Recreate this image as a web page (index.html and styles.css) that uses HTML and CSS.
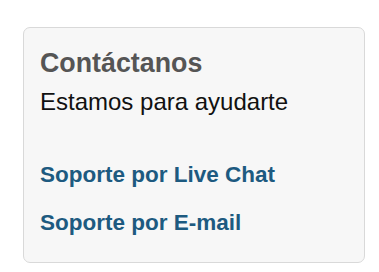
FILE: index.html
```html
<!DOCTYPE html>
<html>
<head>
  <title>Contacto</title>
  <link rel="stylesheet" href="styles.css">
</head>
<body>

<div class="page">
  <div class="contact-box">
    <h2>Contáctanos</h2>
    <p>Estamos para ayudarte</p>
    <ul class="links">
      <li><a href="#">Soporte por Live Chat</a></li>
      <li><a href="#">Soporte por E-mail</a></li>
    </ul>
  </div>
</div>

</body>
</html>
```

FILE: styles.css
```css
body { margin: 0; background: #fff; font-family: "Liberation Sans", Arial, sans-serif; }
.page { padding: 27px 14px 0 23px; }
.contact-box { box-sizing: border-box; width: 342px; height: 236px; padding: 19px 16px 0 16px; background: #f7f7f7; border: 1px solid #d9d9d9; border-radius: 7px; }
.contact-box h2 { margin: 0; font-size: 26.8px; line-height: 32px; color: #555; }
.contact-box p { margin: 9px 0 0; font-size: 24px; line-height: 28px; color: #111; }
.links { list-style: none; margin: 45px 0 0; padding: 0; display: flex; flex-direction: column; gap: 20px; }
.links a { display: block; font-size: 22.5px; line-height: 28px; font-weight: bold; color: #1d5a80; text-decoration: none; }
```
